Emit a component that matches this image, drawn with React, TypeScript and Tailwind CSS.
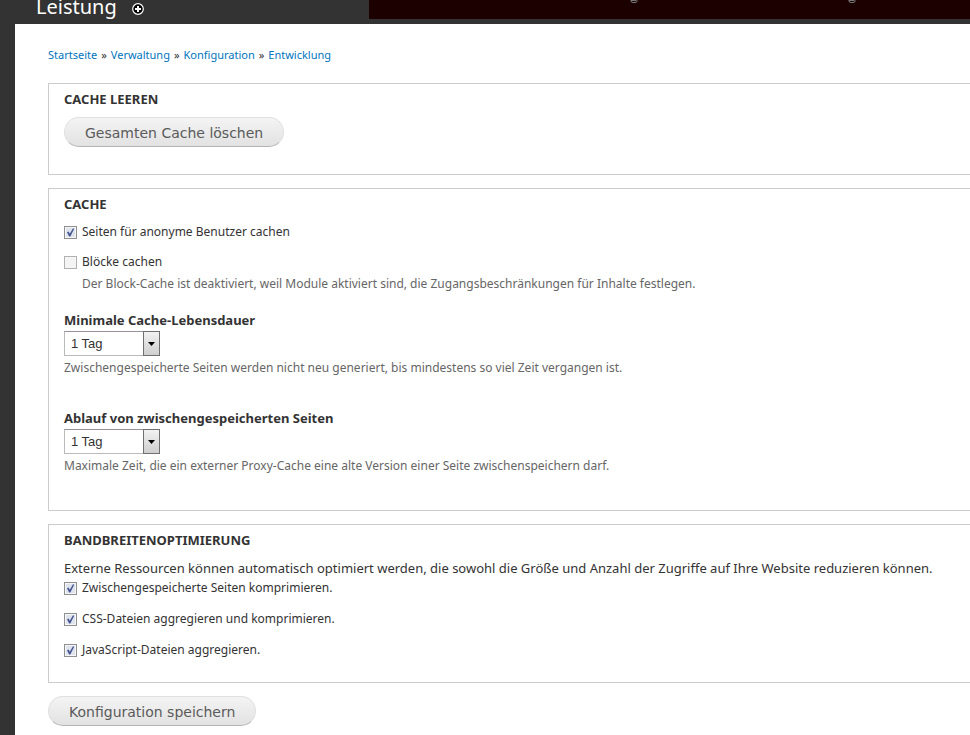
import type { ReactNode } from 'react'

const durations = ['keine', '1 Minute', '1 Stunde', '6 Stunden', '12 Stunden', '1 Tag']

function Panel({ title, className, children }: { title: string; className: string; children: ReactNode }) {
  return (
    <section className={`border border-r-0 border-[#ccc] pl-[15px] pt-[5px] ${className}`}>
      <h2 className="text-[13px] leading-5 font-bold uppercase">{title}</h2>
      {children}
    </section>
  )
}

function PillButton({ children }: { children: ReactNode }) {
  return (
    <button
      type="button"
      className="block h-[30px] rounded-full border border-[#e0e0e0] border-b-[#b4b4b4] bg-linear-to-b from-[#f4f4f4] to-[#e2e2e2] px-5 pt-px font-['DejaVu_Sans',sans-serif] text-sm text-[#5a5a5a]"
    >
      {children}
    </button>
  )
}

function Checkbox({ id, label, checked = false, disabled = false }: { id: string; label: string; checked?: boolean; disabled?: boolean }) {
  return (
    <div className="flex h-5 items-center gap-[5px]">
      <span className="relative size-[13px]">
        <input
          id={id}
          type="checkbox"
          defaultChecked={checked}
          disabled={disabled}
          className="peer block size-[13px] appearance-none border border-[#8e8f8f] bg-[#dfe3ee] shadow-[inset_0_0_0_1px_#f6f6f6] disabled:border-[#b1b1b1] disabled:bg-[#f4f4f4]"
        />
        <svg viewBox="0 0 13 13" className="pointer-events-none invisible absolute inset-0 size-[13px] peer-checked:visible">
          <path d="M3 6.2 4.6 5.6 5.8 7.7 9 2.2 10.2 2.8 6.3 10.5 5.2 10.5Z" fill="#43548f" />
        </svg>
      </span>
      <label htmlFor={id} className="text-xs leading-5 whitespace-nowrap">{label}</label>
    </div>
  )
}

function SelectField({ id, label, help }: { id: string; label: string; help: string }) {
  return (
    <div>
      <label htmlFor={id} className="mb-px block text-[13px] leading-5 font-bold">{label}</label>
      <div className="relative w-24">
        <select
          id={id}
          defaultValue="1 Tag"
          className="block h-[25px] w-full appearance-none border border-[#bbb] border-t-[#9a909a] bg-white pl-1.5 font-['Liberation_Sans',Arial,sans-serif] text-[13px]"
        >
          {durations.map((item) => (
            <option key={item}>{item}</option>
          ))}
        </select>
        <span className="pointer-events-none absolute inset-y-0 right-0 flex w-[17px] items-center justify-center border border-[#707070] bg-linear-to-b from-[#f2f2f2] to-[#cfcfcf]">
          <svg width="7" height="4" viewBox="0 0 7 4">
            <path d="M0 0h7L3.5 4z" fill="#000" />
          </svg>
        </span>
      </div>
      <p className="mt-0.5 text-xs leading-5 text-[#666]">{help}</p>
    </div>
  )
}

function Header() {
  return (
    <header className="flex h-6 items-start">
      <div className="flex h-6 w-[369px] shrink-0 items-center gap-[15px] pl-9">
        <h1 className="-mt-2.5 text-xl leading-5 text-white">Leistung</h1>
        <button type="button" aria-label="Zu Verknüpfungen hinzufügen" className="-mt-1.5">
          <svg width="12" height="12" viewBox="0 0 12 12">
            <circle cx="6" cy="6" r="5.3" fill="#000" stroke="#fff" strokeWidth="1.2" />
            <path d="M6 3v6M3 6h6" stroke="#fff" strokeWidth="2" />
          </svg>
        </button>
      </div>
      <div className="h-[19px] grow overflow-hidden bg-[#1c0000]">
        {/* lower edge of the tab row */}
        <svg width="500" height="4" viewBox="0 0 500 4" fill="none" stroke="#777" className="block">
          <path d="M262 0.5h5M262 0v1q0 1.5 2 1.5h2q2 0 2-1.5V0M480 0.5h5M480 0v1q0 1.5 2 1.5h2q2 0 2-1.5V0" />
        </svg>
      </div>
    </header>
  )
}

const crumbs = ['Startseite', 'Verwaltung', 'Konfiguration', 'Entwicklung']

export default function App() {
  return (
    <div className="min-h-screen bg-[#333] font-['Noto_Sans',sans-serif] text-[#333]">
      <Header />
      <main className="ml-[15px] min-h-[calc(100vh-24px)] bg-white pb-2 pl-[33px] pt-[21px]">
        <nav aria-label="Breadcrumb" className="mb-[18px] flex gap-1 text-[11px] leading-5">
          {crumbs.map((crumb, i) => (
            <span key={crumb} className="flex gap-1">
              {i > 0 && <span>»</span>}
              <a href="#" className="text-[#0074bd]">{crumb}</a>
            </span>
          ))}
        </nav>

        <form className="flex flex-col items-stretch gap-[13px]">
          <Panel title="Cache leeren" className="pb-[27px]">
            <div className="mt-2">
              <PillButton>Gesamten Cache löschen</PillButton>
            </div>
          </Panel>

          <Panel title="Cache" className="pb-[34px]">
            <div className="mt-2 flex flex-col gap-2.5">
              <Checkbox id="cache-pages" label="Seiten für anonyme Benutzer cachen" checked />
              <Checkbox id="cache-blocks" label="Blöcke cachen" disabled />
            </div>
            <p className="mt-0.5 pl-[18px] text-xs leading-5 text-[#666]">
              Der Block-Cache ist deaktiviert, weil Module aktiviert sind, die Zugangsbeschränkungen für Inhalte festlegen.
            </p>
            <div className="mt-4 flex flex-col gap-[30px]">
              <SelectField
                id="min-lifetime"
                label="Minimale Cache-Lebensdauer"
                help="Zwischengespeicherte Seiten werden nicht neu generiert, bis mindestens so viel Zeit vergangen ist."
              />
              <SelectField
                id="max-age"
                label="Ablauf von zwischengespeicherten Seiten"
                help="Maximale Zeit, die ein externer Proxy-Cache eine alte Version einer Seite zwischenspeichern darf."
              />
            </div>
          </Panel>

          <Panel title="Bandbreitenoptimierung" className="pb-[22px]">
            <p className="mt-2 text-[13px] leading-5">
              Externe Ressourcen können automatisch optimiert werden, die sowohl die Größe und Anzahl der Zugriffe auf Ihre Website reduzieren können.
            </p>
            <div className="flex flex-col gap-[11px]">
              <Checkbox id="compress-pages" label="Zwischengespeicherte Seiten komprimieren." checked />
              <Checkbox id="aggregate-css" label="CSS-Dateien aggregieren und komprimieren." checked />
              <Checkbox id="aggregate-js" label="JavaScript-Dateien aggregieren." checked />
            </div>
          </Panel>

          <div>
            <PillButton>Konfiguration speichern</PillButton>
          </div>
        </form>
      </main>
    </div>
  )
}
